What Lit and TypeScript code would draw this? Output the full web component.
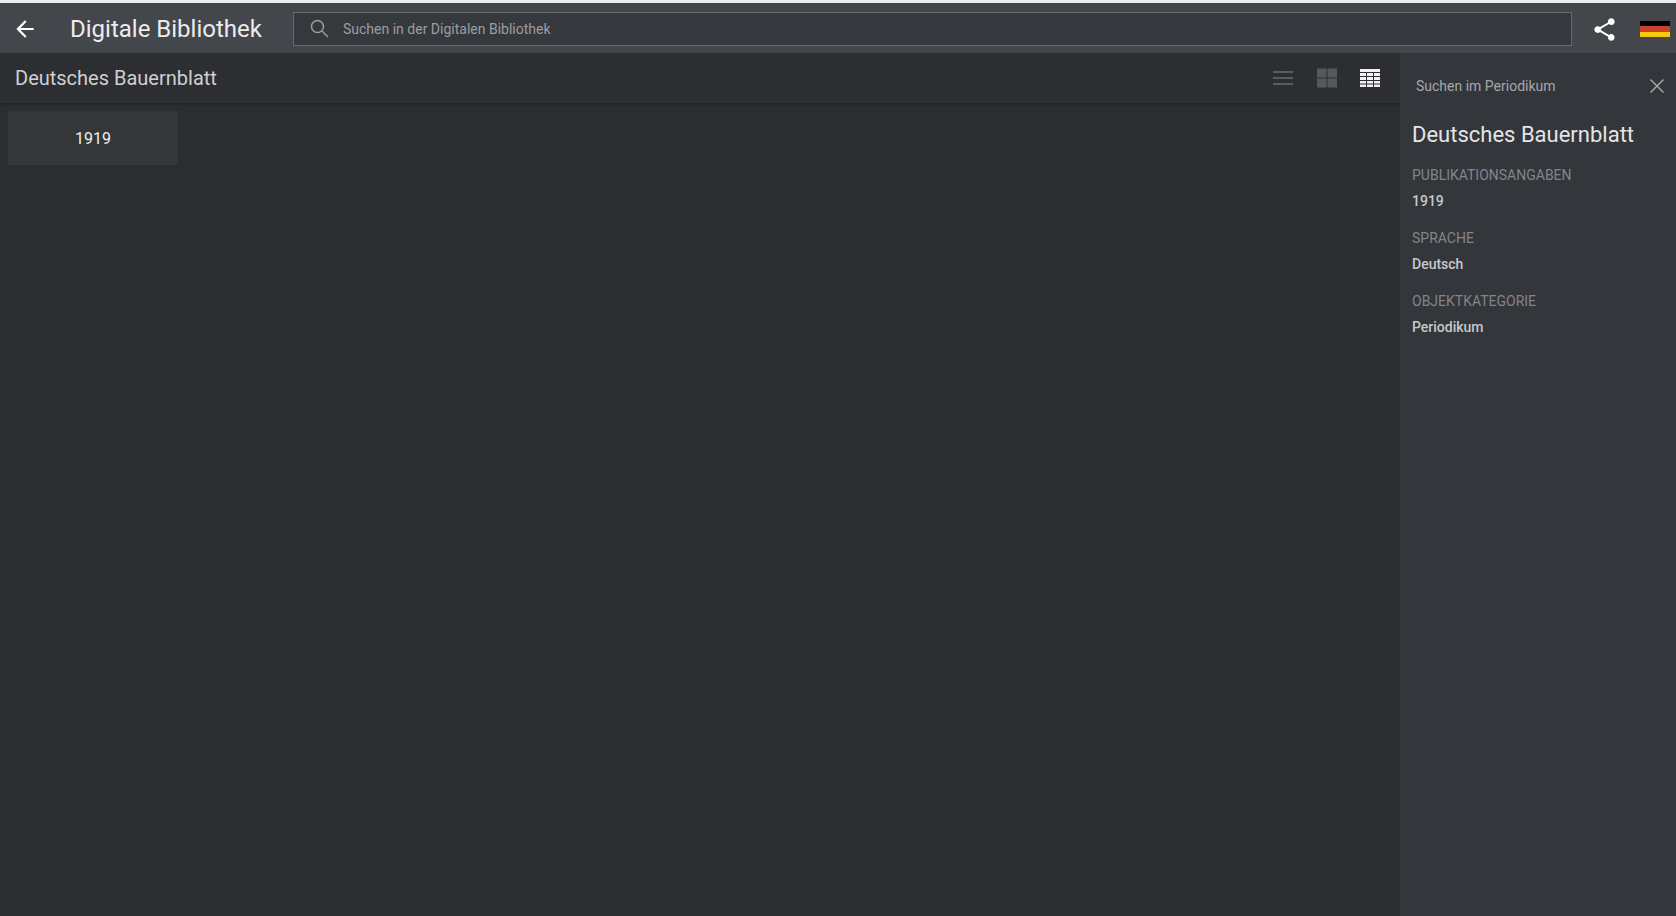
import { LitElement, html, css } from "lit";
import { customElement } from "lit/decorators.js";

@customElement("app-root")
export class AppRoot extends LitElement {
  static styles = css`
    :host { display: flex; flex-direction: column; width: 100%; height: 916px; overflow: hidden; background: #2b2d31; font-family: Roboto, "Liberation Sans", sans-serif; border-top: 3px solid #eceded; box-sizing: border-box; }
    .top { height: 50px; flex: none; display: flex; align-items: center; background: #43464b; position: relative; z-index: 2; padding-top: 2px; box-sizing: border-box; }
    .back { width: 26px; height: 26px; margin-left: 12px; flex: none; display: block; }
    .brand { margin-left: 32px; width: 223px; flex: none; font-size: 24px; color: #ececec; line-height: 48px; white-space: nowrap; }
    .search { width: 1279px; height: 34px; box-sizing: border-box; flex: none; border: 1px solid #66696d; background: #35383d; display: flex; align-items: center; }
    .search svg { width: 24px; height: 24px; margin-left: 14px; flex: none; }
    .search span { margin-left: 11px; font-size: 14px; color: #9c9d9f; }
    .share { width: 27px; height: 27px; margin-left: 19px; flex: none; }
    .flag { width: 30px; height: 16px; margin-left: 22px; flex: none; display: flex; flex-direction: column; }
    .flag i { flex: 1; display: block; }
    .body { flex: 1; display: flex; min-height: 0; }
    .main { flex: 1; min-width: 0; }
    .sub { height: 50px; display: flex; align-items: center; background: #2c2e32; box-shadow: 0 1px 3px rgba(0,0,0,.3); padding: 0 20px 0 15px; }
    .sub h2 { flex: 1; margin: 0; font-weight: 400; font-size: 20px; color: #cfd0d1; }
    .tools { display: flex; gap: 23px; }
    .tools svg { width: 20px; height: 20px; display: block; }
    .tools .list { margin-right: 1px; }
    .cards { padding: 8px; }
    .card { width: 170px; height: 54px; background: #343638; color: #f0f0f0; font-size: 16px; display: flex; align-items: center; justify-content: center; }
    .side { width: 276px; flex: none; background: #33363b; padding: 16px 4px 0 8px; box-sizing: border-box; }
    .find { height: 33px; box-sizing: border-box; border: 1px solid #36393e; display: flex; align-items: center; justify-content: space-between; padding: 0 5px 0 7px; font-size: 14px; color: #a6a7a9; }
    .find svg { width: 18px; height: 18px; display: block; }
    .info { padding: 0 0 0 4px; }
    .info h1 { margin: 18px 0 0; font-weight: 400; font-size: 22px; line-height: 30px; color: #e4e5e6; }
    dl { margin: 14px 0 0; }
    dt { font-size: 14px; line-height: 22px; color: #83858a; text-transform: uppercase; }
    dd { margin: 4px 0 0; font-size: 14px; line-height: 22px; font-weight: 500; color: #c8c8c9; height: 37px; }
  `;

  render() {
    return html`
      <header class="top">
        <svg class="back" viewBox="0 0 24 24"><path fill="#fff" d="M20 11H7.83l5.59-5.59L12 4l-8 8 8 8 1.41-1.41L7.83 13H20v-2z"/></svg>
        <div class="brand">Digitale Bibliothek</div>
        <div class="search">
          <svg viewBox="0 0 24 24"><path fill="none" stroke="#9c9d9f" stroke-width="1.5" d="M15.500 9.500a6 6 0 1 1-12 0a6 6 0 1 1 12 0zM13.800 13.800l6.200 6.200"/></svg>
          <span>Suchen in der Digitalen Bibliothek</span>
        </div>
        <svg class="share" viewBox="0 0 24 24"><path fill="#fff" d="M18 16.08c-.76 0-1.44.3-1.96.77L8.91 12.7c.05-.23.09-.46.09-.7s-.04-.47-.09-.7l7.05-4.11c.54.5 1.25.81 2.04.81 1.66 0 3-1.34 3-3s-1.34-3-3-3-3 1.34-3 3c0 .24.04.47.09.7L8.04 9.81C7.5 9.31 6.79 9 6 9c-1.66 0-3 1.34-3 3s1.34 3 3 3c.79 0 1.5-.31 2.04-.81l7.12 4.16c-.05.21-.08.43-.08.65 0 1.61 1.31 2.92 2.92 2.92 1.61 0 2.92-1.31 2.92-2.92s-1.31-2.92-2.92-2.92z"/></svg>
        <div class="flag"><i style="background:#000"></i><i style="background:#cc412c"></i><i style="background:#f7ca0c"></i></div>
      </header>
      <div class="body">
        <main class="main">
          <div class="sub">
            <h2>Deutsches Bauernblatt</h2>
            <div class="tools">
              <svg class="list" viewBox="0 0 20 20"><path fill="#5a5c60" d="M0 3h20v2H0zM0 9h20v2H0zM0 15h20v2H0z"/></svg>
              <svg viewBox="0 0 20 20"><path fill="#56585c" d="M0 0.500h9.500V9.500H0zM10.500 0.500H20V9.500h-9.500zM0 10.500h9.500V19.500H0zM10.500 10.500H20V19.500h-9.500z"/></svg>
              <svg viewBox="0 0 20 20"><path fill="#f2f2f2" d="M0 1h20v3H0zM0 5h6v3H0zM7 5h6v3H7zM14 5h6v3h-6zM0 9h6v3H0zM7 9h6v3H7zM14 9h6v3h-6zM0 13h6v2.500H0zM7 13h6v2.500H7zM14 13h6v2.500h-6zM0 16.500h6V19H0zM7 16.500h6V19H7zM14 16.500h6V19h-6z"/></svg>
            </div>
          </div>
          <div class="cards"><div class="card">1919</div></div>
        </main>
        <aside class="side">
          <div class="find">
            <span>Suchen im Periodikum</span>
            <svg viewBox="0 0 18 18"><path fill="none" stroke="#aeafb1" stroke-width="1.4" d="M2.500 2.500l13 13M15.500 2.500l-13 13"/></svg>
          </div>
          <div class="info">
            <h1>Deutsches Bauernblatt</h1>
            <dl>
              <dt>Publikationsangaben</dt><dd>1919</dd>
              <dt>Sprache</dt><dd>Deutsch</dd>
              <dt>Objektkategorie</dt><dd>Periodikum</dd>
            </dl>
          </div>
        </aside>
      </div>
    `;
  }
}
